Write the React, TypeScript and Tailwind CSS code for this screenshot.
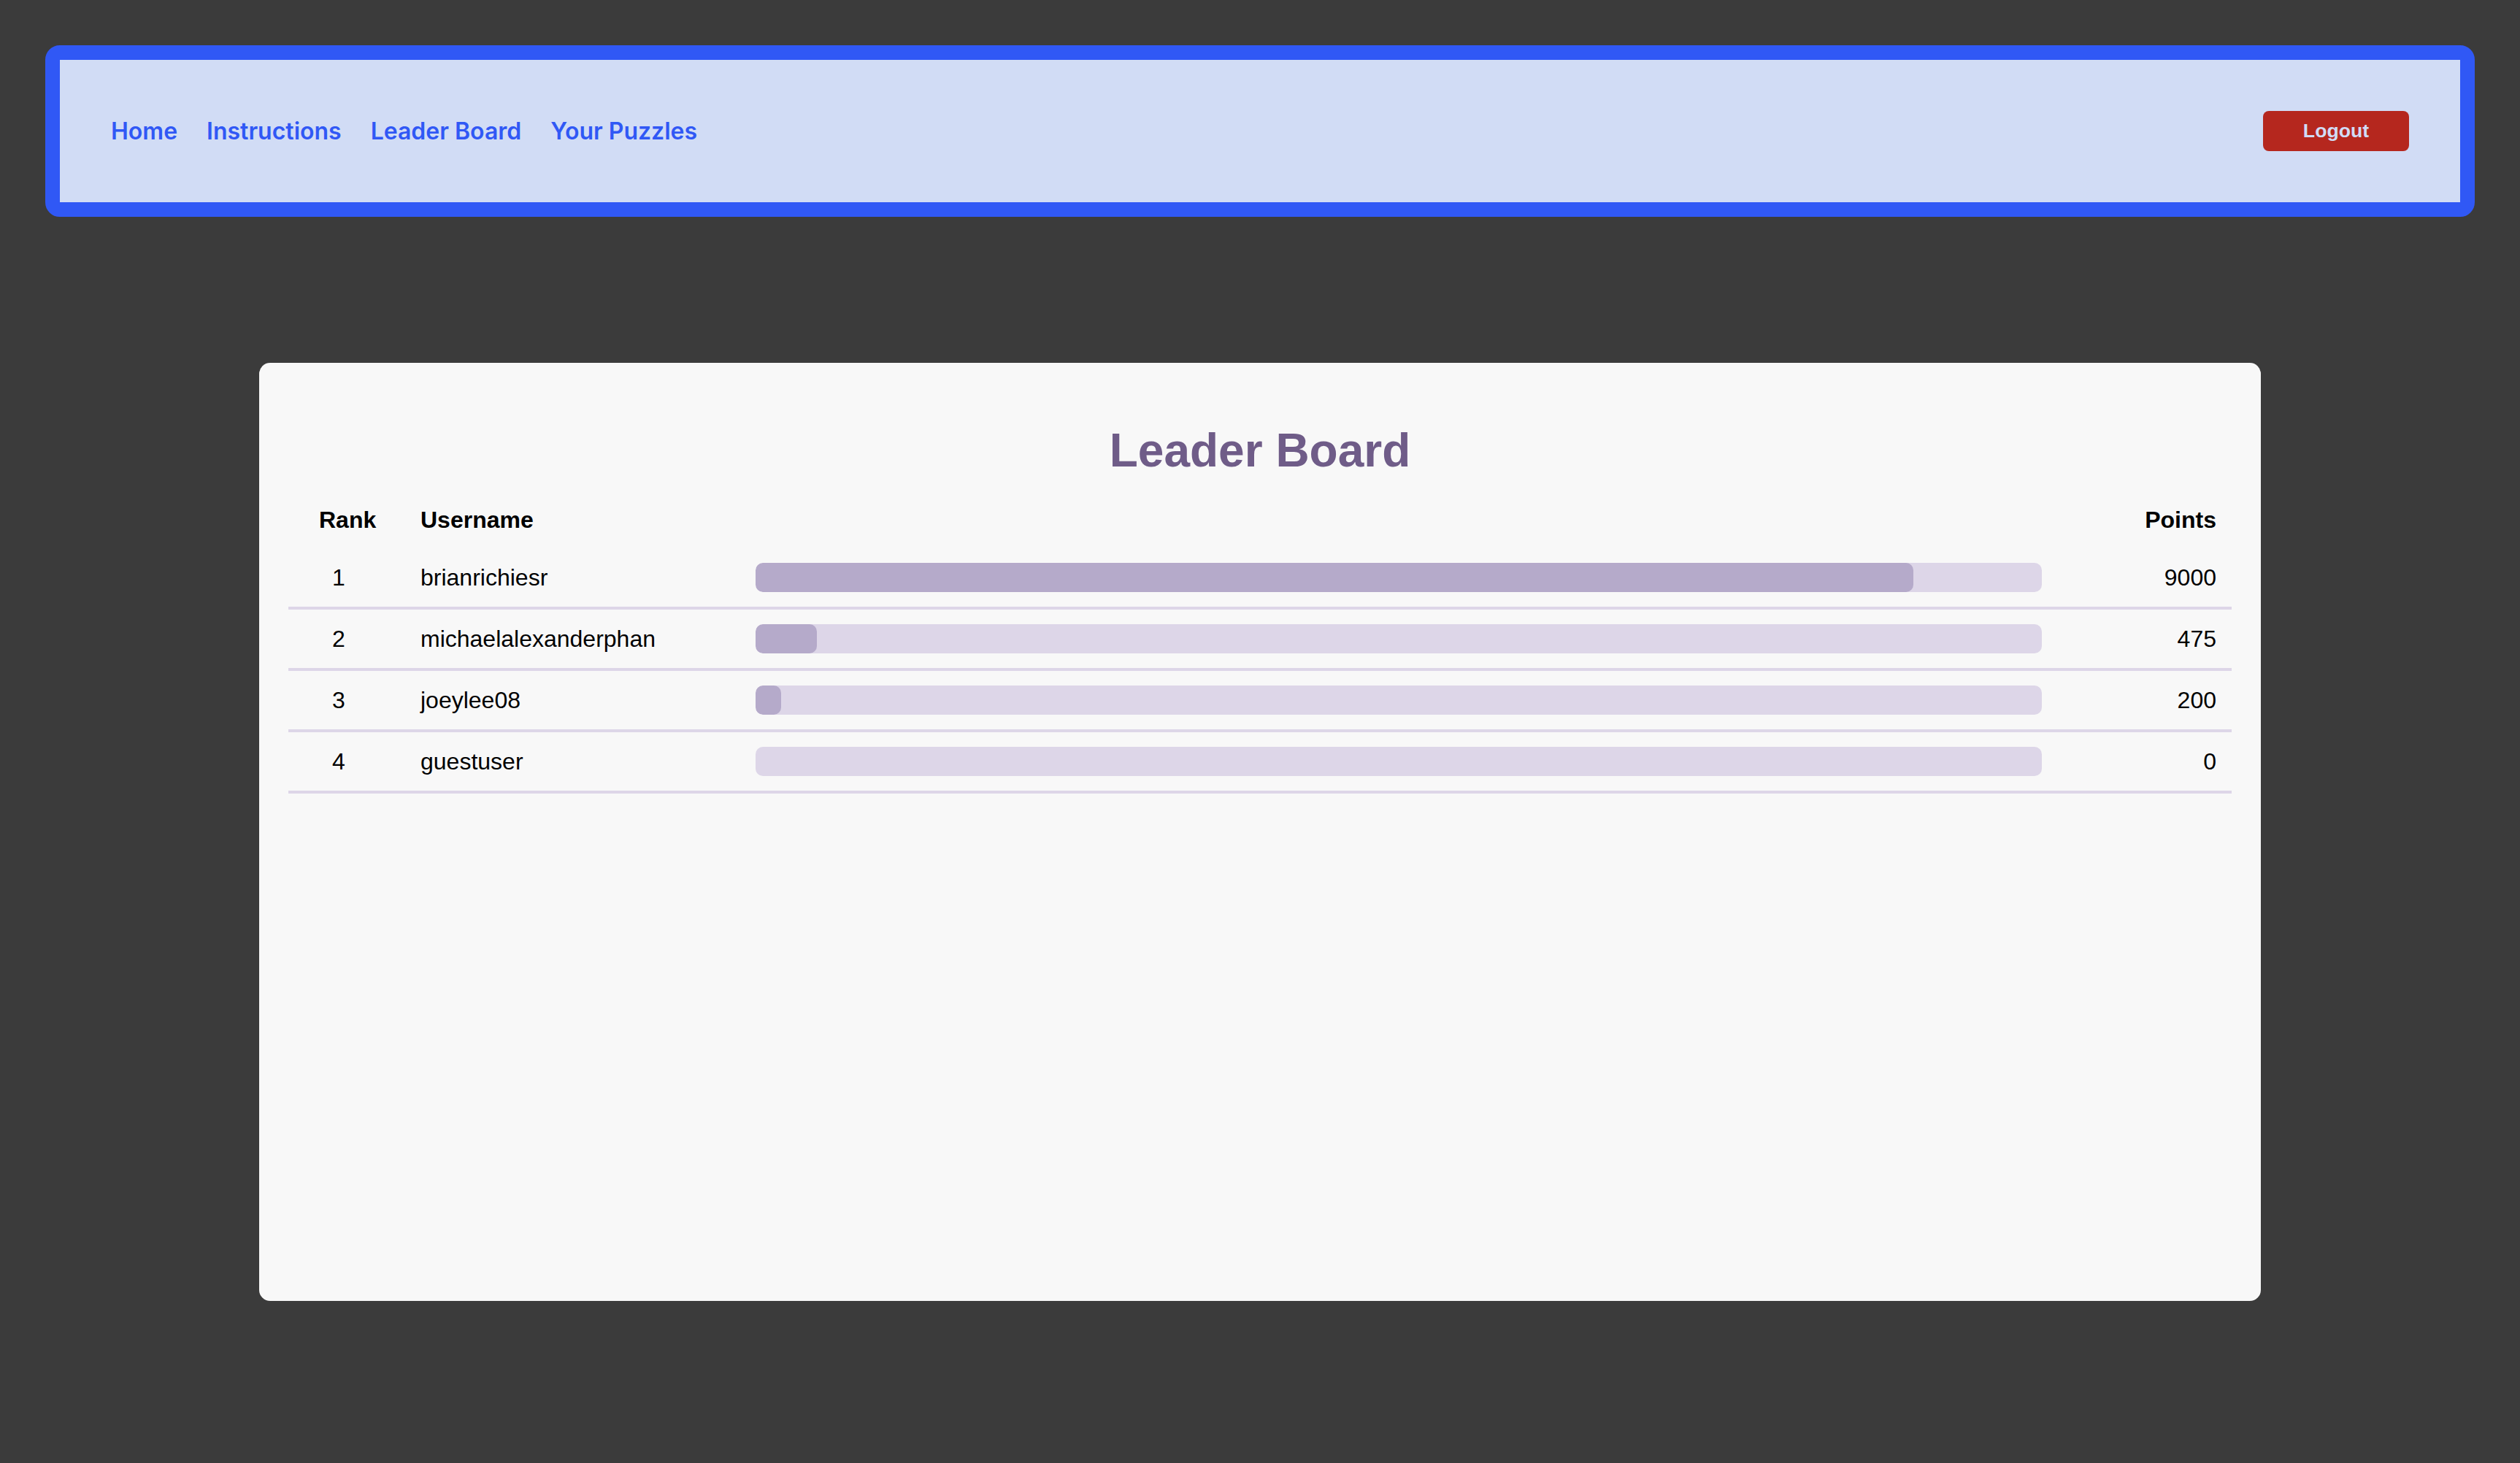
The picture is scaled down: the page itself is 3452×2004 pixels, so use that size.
const players = [
  { rank: 1, username: "brianrichiesr", points: 9000 },
  { rank: 2, username: "michaelalexanderphan", points: 475 },
  { rank: 3, username: "joeylee08", points: 200 },
  { rank: 4, username: "guestuser", points: 0 },
];

const MAX_POINTS = 10000;

const NavBar = () => {
  return (
    <nav className="flex items-center justify-between h-[235px] border-[20px] border-[#3058f5] rounded-[20px] bg-[#d1dcf5] px-[70px]">
      <ul className="flex items-center gap-10 font-['Inter',sans-serif] font-semibold text-[32px] leading-[40px] text-[#3058f5]">
        <li>Home</li>
        <li>Instructions</li>
        <li>Leader Board</li>
        <li>Your Puzzles</li>
      </ul>
      <button className="w-[200px] h-[55px] rounded-[8px] bg-[#b5271e] text-[#d1dcf5] font-['Liberation_Sans',Arial,sans-serif] font-bold text-[26.67px] leading-none">
        Logout
      </button>
    </nav>
  );
};

const LeaderRow = ({ rank, username, points }: { rank: number; username: string; points: number }) => {
  const pct = (points / MAX_POINTS) * 100;
  return (
    <div className="flex items-center py-5 border-b-4 border-[#ddd6e8] text-[32px] leading-[37px] text-black">
      <div className="w-[138px] text-center">{rank}</div>
      <div className="w-[502px] pl-[43px]">{username}</div>
      <div className="flex-1 h-10 rounded-[10px] bg-[#ddd6e8] overflow-hidden">
        <div className="h-full rounded-[10px] bg-[#b5aaca]" style={{ width: `${pct}%` }} />
      </div>
      <div className="w-[260px] pr-[21px] text-right">{points}</div>
    </div>
  );
};

export default function App() {
  return (
    <div className="min-h-screen bg-[#3b3b3b] px-[62px] pt-[62px] pb-[222px]">
      <NavBar />
      <main className="mx-auto mt-[200px] w-[2742px] h-[1285px] rounded-[15px] bg-[#f8f8f8] px-10 pt-[83px] font-['Liberation_Sans',Arial,sans-serif]">
        <h1 className="text-center text-[64px] leading-[74px] font-bold text-[#6f5c88] mb-5">Leader Board</h1>
        <div className="flex items-center py-5 text-[32px] leading-[37px] font-bold text-black">
          <div className="w-[138px] pl-[42px]">Rank</div>
          <div className="w-[502px] pl-[43px]">Username</div>
          <div className="flex-1" />
          <div className="w-[260px] pr-[21px] text-right">Points</div>
        </div>
        {players.map((p) => (
          <LeaderRow key={p.rank} {...p} />
        ))}
      </main>
    </div>
  );
}
